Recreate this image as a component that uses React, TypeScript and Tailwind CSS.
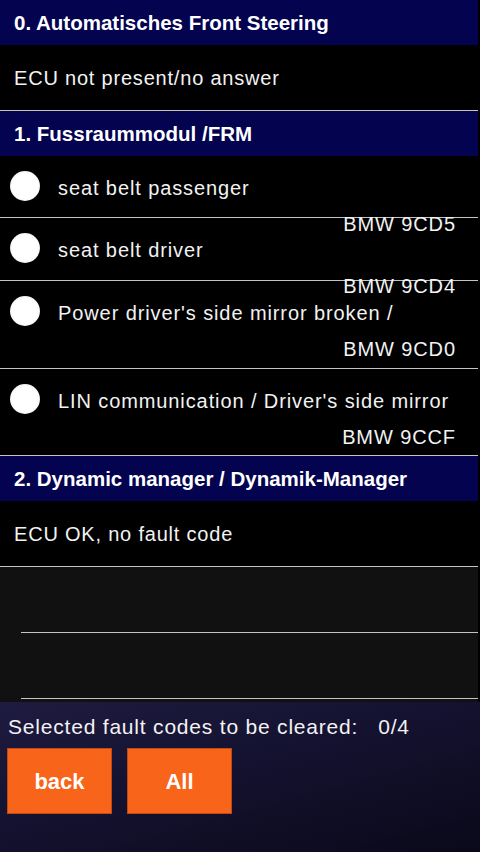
import React from 'react';

type Fault = {
  label: string;
  code: string;
  height: string;
};

const faults: Fault[] = [
  { label: 'seat belt passenger', code: 'BMW 9CD5', height: 'h-[62px]' },
  { label: 'seat belt driver', code: 'BMW 9CD4', height: 'h-[63px]' },
  {
    label: "Power driver's side mirror broken /",
    code: 'BMW 9CD0',
    height: 'h-[88px]',
  },
  {
    label: "LIN communication / Driver's side mirror",
    code: 'BMW 9CCF',
    height: 'h-[87px]',
  },
];

function SectionHeader({ title }: { title: string }) {
  return (
    <div className="h-[45px] shrink-0 flex items-center pl-[14px] bg-[#03034f] text-[20.5px] font-bold leading-[24px]">
      {title}
    </div>
  );
}

function MessageRow({ text }: { text: string }) {
  return (
    <div className="h-[66px] shrink-0 flex items-center pl-[14px] border-b border-[#c4c4c4] text-[20px] leading-[24px] tracking-[0.8px] text-[#f2f2f2]">
      {text}
    </div>
  );
}

function Radio() {
  return (
    <span className="block size-[30px] shrink-0 rounded-full bg-[radial-gradient(circle,#ffffff_62%,#b9b9b9_100%)]" />
  );
}

function FaultRow({ fault }: { fault: Fault }) {
  return (
    <div
      className={`${fault.height} shrink-0 flex items-start pl-[10px] pt-[15px] border-b border-[#c4c4c4]`}
    >
      <Radio />
      <div className="flex-1 ml-[18px] pt-[5px] text-[20px] leading-[24px] tracking-[0.9px] text-[#f2f2f2]">
        <div className="whitespace-nowrap">{fault.label}</div>
        <div className="mt-[12px] pr-[22px] text-right">{fault.code}</div>
      </div>
    </div>
  );
}

function EmptyRow() {
  return (
    <div className="h-[66px] shrink-0 flex flex-col justify-end">
      <div className="ml-[21px] border-b border-[#c4c4c4]" />
    </div>
  );
}

export default function App() {
  return (
    <div className="w-[480px] h-[852px] flex flex-col overflow-hidden bg-black text-white font-['Liberation_Sans',Arial,sans-serif]">
      <div className="h-[702px] shrink-0 flex flex-col pr-[2px] bg-black">
        <SectionHeader title="0. Automatisches Front Steering" />
        <MessageRow text="ECU not present/no answer" />
        <SectionHeader title="1. Fussraummodul /FRM" />
        {faults.map((fault) => (
          <FaultRow key={fault.code} fault={fault} />
        ))}
        <SectionHeader title="2. Dynamic manager / Dynamik-Manager" />
        <MessageRow text="ECU OK, no fault code" />
        <div className="flex-1 flex flex-col bg-[#111111]">
          <EmptyRow />
          <EmptyRow />
        </div>
      </div>

      <div className="flex-1 flex flex-col pl-[7px] pt-[13px] bg-[linear-gradient(165deg,#1e1b40_0%,#141230_45%,#0a0919_100%)]">
        <div className="pl-[1px] text-[21px] leading-[24px] tracking-[0.8px] text-[#f2f2f2] whitespace-nowrap">
          Selected fault codes to be cleared:
          <span className="ml-[20px]">0/4</span>
        </div>
        <div className="mt-[9px] flex gap-[15px]">
          <button
            type="button"
            className="w-[105px] h-[66px] border border-[#bf4a12] bg-[#f86419] text-[22px] font-bold text-white"
          >
            back
          </button>
          <button
            type="button"
            className="w-[105px] h-[66px] border border-[#bf4a12] bg-[#f86419] text-[22px] font-bold text-white"
          >
            All
          </button>
        </div>
      </div>
    </div>
  );
}
